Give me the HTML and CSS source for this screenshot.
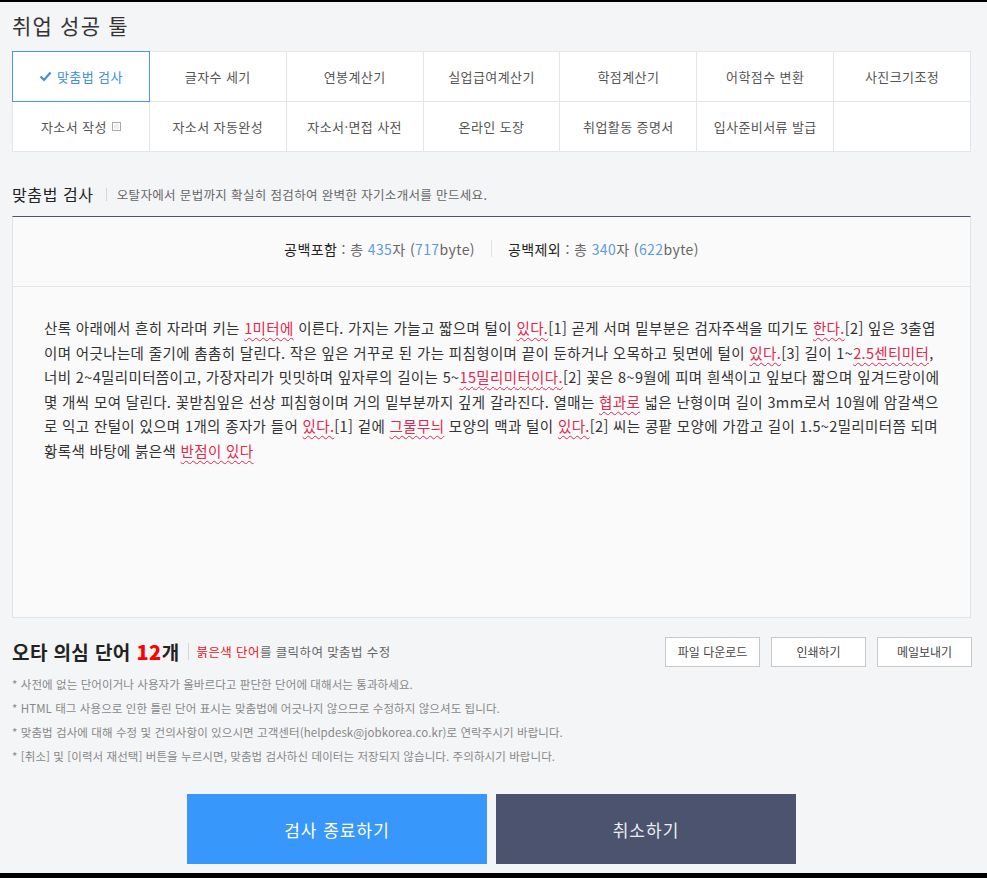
FILE: index.html
```html
<!DOCTYPE html>
<html lang="ko">
<head>
<meta charset="utf-8">
<title>취업 성공 툴</title>
<link rel="stylesheet" href="styles.css">
</head>
<body>
<div class="page">
  <h1 class="title">취업 성공 툴</h1>

  <div class="tabs">
    <div class="tab active"><svg class="check" width="13" height="11" viewBox="0 0 13 11"><polyline points="1.5,5.5 5,9 11.5,1.5" fill="none" stroke="#3f8ee0" stroke-width="2.2"/></svg>맞춤법 검사</div>
    <div class="tab">글자수 세기</div>
    <div class="tab">연봉계산기</div>
    <div class="tab">실업급여계산기</div>
    <div class="tab">학점계산기</div>
    <div class="tab">어학점수 변환</div>
    <div class="tab">사진크기조정</div>
    <div class="tab">자소서 작성<span class="newwin"></span></div>
    <div class="tab">자소서 자동완성</div>
    <div class="tab">자소서·면접 사전</div>
    <div class="tab">온라인 도장</div>
    <div class="tab">취업활동 증명서</div>
    <div class="tab">입사준비서류 발급</div>
    <div class="tab"></div>
  </div>

  <div class="sec-head">
    <h2 class="sec-title">맞춤법 검사</h2>
    <span class="bar"></span>
    <span class="sec-desc">오탈자에서 문법까지 확실히 점검하여 완벽한 자기소개서를 만드세요.</span>
  </div>

  <div class="box">
    <div class="counts">
      <span class="cnt"><b>공백포함</b> : 총 <em>435</em>자 (<em>717</em>byte)</span>
      <span class="cbar"></span>
      <span class="cnt"><b>공백제외</b> : 총 <em>340</em>자 (<em>622</em>byte)</span>
    </div>
    <div class="text">산록 아래에서 흔히 자라며 키는 <span class="err">1미터에</span> 이른다. 가지는 가늘고 짧으며 털이 <span class="err">있다.</span>[1] 곧게 서며 밑부분은 검자주색을 띠기도 <span class="err">한다.</span>[2] 잎은 3출엽<br>이며 어긋나는데 줄기에 촘촘히 달린다. 작은 잎은 거꾸로 된 가는 피침형이며 끝이 둔하거나 오목하고 뒷면에 털이 <span class="err">있다.</span>[3] 길이 1~<span class="err">2.5센티미터</span>,<br>너비 2~4밀리미터쯤이고, 가장자리가 밋밋하며 잎자루의 길이는 5~<span class="err">15밀리미터이다.</span>[2] 꽃은 8~9월에 피며 흰색이고 잎보다 짧으며 잎겨드랑이에<br>몇 개씩 모여 달린다. 꽃받침잎은 선상 피침형이며 거의 밑부분까지 깊게 갈라진다. 열매는 <span class="err">협과로</span> 넓은 난형이며 길이 3mm로서 10월에 암갈색으<br>로 익고 잔털이 있으며 1개의 종자가 들어 <span class="err">있다.</span>[1] 겉에 <span class="err">그물무늬</span> 모양의 맥과 털이 <span class="err">있다.</span>[2] 씨는 콩팥 모양에 가깝고 길이 1.5~2밀리미터쯤 되며<br>황록색 바탕에 붉은색 <span class="err">반점이 있다</span></div>
  </div>

  <div class="typo-row">
    <div class="typo-head">
      <h3 class="typo-title">오타 의심 단어 <strong>12</strong>개</h3>
      <span class="bar"></span>
      <span class="typo-desc"><span class="red">붉은색 단어</span>를 클릭하여 맞춤법 수정</span>
    </div>
    <div class="actions">
      <button class="btn">파일 다운로드</button>
      <button class="btn">인쇄하기</button>
      <button class="btn">메일보내기</button>
    </div>
  </div>

  <ul class="notes">
    <li>* 사전에 없는 단어이거나 사용자가 올바르다고 판단한 단어에 대해서는 통과하세요.</li>
    <li>* HTML 태그 사용으로 인한 틀린 단어 표시는 맞춤법에 어긋나지 않으므로 수정하지 않으셔도 됩니다.</li>
    <li>* 맞춤법 검사에 대해 수정 및 건의사항이 있으시면 고객센터(helpdesk@jobkorea.co.kr)로 연락주시기 바랍니다.</li>
    <li>* [취소] 및 [이력서 재선택] 버튼을 누르시면, 맞춤법 검사하신 데이터는 저장되지 않습니다. 주의하시기 바랍니다.</li>
  </ul>

  <div class="final">
    <button class="big primary">검사 종료하기</button>
    <button class="big secondary">취소하기</button>
  </div>
</div>
</body>
</html>
```
FILE: styles.css
```css
html {
  background: #000;
}
body {
  margin: 0;
  height: 873px;
  box-sizing: border-box;
  border-top: 2px solid #000;
  background: #f4f5f7;
  font-family: "Noto Sans CJK KR", "Noto Sans", sans-serif;
  color: #333;
  overflow: hidden;
}
.page {
  width: 959px;
  margin-left: 12px;
}
.title {
  margin: 8px 0 0;
  font-size: 21px;
  line-height: 30px;
  font-weight: 400;
  color: #333;
  letter-spacing: 1.2px;
}
.tabs {
  margin-top: 11px;
  display: grid;
  grid-template-columns: repeat(7, 1fr);
  grid-auto-rows: 49px;
  gap: 1px;
  padding: 1px;
  background: #e3e5e8;
}
.tab {
  background: #fff;
  display: flex;
  align-items: center;
  justify-content: center;
  font-size: 13px;
  color: #555;
  letter-spacing: 0.4px;
}
.tab.active {
  z-index: 1;
  box-shadow: 0 0 0 1px #4a95e6;
  color: #3f8ee0;
}
.check {
  margin-right: 5px;
}
.newwin {
  display: inline-block;
  width: 7px;
  height: 7px;
  margin-left: 5px;
  border: 1px solid #aaa;
  background: #f0f0f0;
  box-shadow: inset 0 0 0 1px #fff;
}
.sec-head {
  margin-top: 30px;
  padding-bottom: 10px;
  display: flex;
  align-items: center;
  height: 24px;
}
.sec-title {
  margin: 0;
  font-size: 16px;
  font-weight: 400;
  color: #222;
  line-height: 24px;
  letter-spacing: 0.6px;
}
.bar {
  width: 1px;
  height: 13px;
  background: #d6d6d6;
  margin: 0 10px 0 12px;
}
.sec-desc {
  font-size: 12.5px;
  color: #666;
  letter-spacing: 0.35px;
}
.box {
  border-top: 1px solid #4e5469;
  border-left: 1px solid #e2e3e5;
  border-right: 1px solid #e2e3e5;
  border-bottom: 1px solid #e2e3e5;
  background: #fafafa;
}
.counts {
  height: 70px;
  box-sizing: border-box;
  padding-bottom: 6px;
  border-bottom: 1px solid #e4e4e4;
  display: flex;
  align-items: center;
  justify-content: center;
  font-size: 14px;
  color: #666;
  letter-spacing: 0.4px;
}
.cnt b {
  font-weight: 400;
  color: #222;
}
.cnt em {
  font-style: normal;
  color: #5b9be3;
}
.cbar {
  width: 1px;
  height: 17px;
  background: #e2e2e2;
  margin: 0 16px;
}
.text {
  height: 330px;
  box-sizing: border-box;
  padding: 29px 10px 0 31px;
  font-size: 14.5px;
  line-height: 24.5px;
  color: #333;
  letter-spacing: 0.36px;
  white-space: nowrap;
  overflow: hidden;
}
.err {
  color: #e2264d;
  text-decoration: underline wavy #e2264d;
  text-decoration-thickness: 1px;
  text-underline-offset: 3px;
}
.typo-row {
  margin-top: 19px;
  display: flex;
  align-items: center;
  justify-content: space-between;
  height: 29px;
}
.typo-head {
  display: flex;
  align-items: center;
}
.typo-title {
  margin: 0;
  font-size: 19px;
  font-weight: 700;
  color: #222;
  letter-spacing: 0.4px;
}
.typo-title strong {
  color: #f00;
  font-size: 20px;
}
.typo-head .bar {
  margin: 0 8px 0 8px;
  height: 17px;
}
.typo-desc {
  font-size: 12.5px;
  color: #666;
  letter-spacing: 0.4px;
}
.red {
  color: #e8161e;
}
.actions {
  display: flex;
  gap: 11px;
  margin-right: -1px;
}
.btn {
  width: 95px;
  height: 30px;
  background: #fff;
  border: 1px solid #c9c9c9;
  font-family: inherit;
  font-size: 12px;
  color: #444;
  padding: 0;
  letter-spacing: 0;
}
.notes {
  list-style: none;
  margin: 6px 0 0;
  padding: 0;
  font-size: 11.5px;
  line-height: 24px;
  color: #888;
  letter-spacing: 0.08px;
}
.final {
  margin-top: 26px;
  display: flex;
  justify-content: center;
  gap: 9px;
}
.big {
  width: 300px;
  height: 70px;
  border: 0;
  font-family: inherit;
  font-size: 17px;
  color: #fff;
  padding: 0;
  letter-spacing: 1px;
}
.primary {
  background: #3797fb;
}
.secondary {
  background: #4b536e;
  color: #eceef3;
}
```
